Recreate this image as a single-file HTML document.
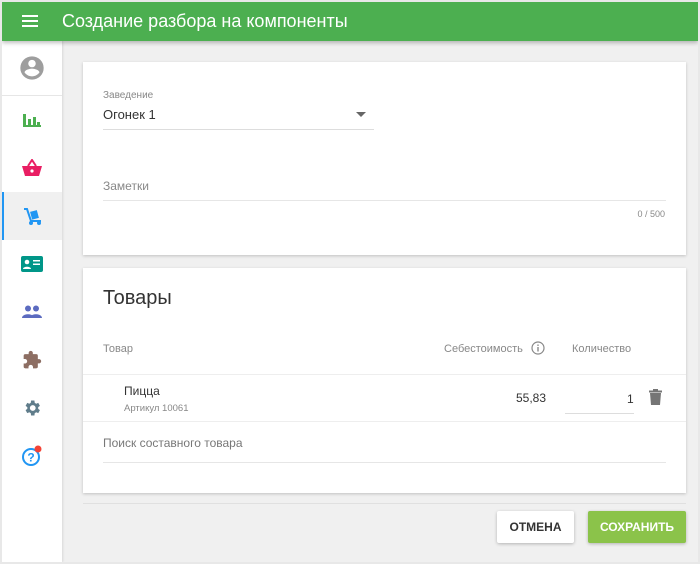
<!DOCTYPE html>
<html><head><meta charset="utf-8"><style>
*{box-sizing:border-box;margin:0;padding:0}
body{width:700px;height:564px;background:#e8e8e8;font-family:"Liberation Sans",sans-serif;position:relative;overflow:hidden}
.frame{position:absolute;left:2px;top:2px;width:696px;height:560px;background:#f0f0f0;overflow:hidden}
.hdr{position:absolute;left:0;top:0;width:696px;height:39px;background:#4caf50;color:#fff;box-shadow:0 2px 4px rgba(0,0,0,.25);z-index:2}
.hdr .t{position:absolute;left:60px;top:9px;font-size:18px}
.side{position:absolute;left:0;top:39px;width:60px;height:521px;background:#fff;box-shadow:1px 0 2px rgba(0,0,0,.1)}
.ic{position:absolute;left:0;width:60px;height:48px;display:flex;align-items:center;justify-content:center}
.card{position:absolute;left:81px;width:603px;background:#fff;box-shadow:0 1px 3px rgba(0,0,0,.2)}
.lbl{position:absolute;color:#888;font-size:10px}
.txt{position:absolute;color:#333;font-size:13px}
.line{position:absolute;height:1px;background:#ddd}
.btn{position:absolute;top:509px;height:32px;font-size:12px;font-weight:bold;display:flex;align-items:center;justify-content:center;box-shadow:0 1px 3px rgba(0,0,0,.25);border-radius:2px}
</style></head><body><div class="frame">
<div class="hdr"><svg style="position:absolute;left:20px;top:13px" width="16" height="12"><rect y="0" width="16" height="2" fill="#fff"/><rect y="5" width="16" height="2" fill="#fff"/><rect y="10" width="16" height="2" fill="#fff"/></svg><div class="t">Создание разбора на компоненты</div></div>
<div class="side">
<div class="ic" style="top:3px;height:48px"><svg width="28" height="28" viewBox="0 0 24 24"><path fill="#9e9e9e" d="M12 2A10 10 0 1 0 12 22A10 10 0 1 0 12 2ZM12 5a3.2 3.2 0 1 1 0 6.4a3.2 3.2 0 1 1 0-6.4ZM12 19.2c-2.7 0-5-1.4-6.4-3.4c0-2.1 4.3-3.3 6.4-3.3s6.4 1.2 6.4 3.3c-1.4 2-3.7 3.4-6.4 3.4Z"/></svg></div>
<div class="line" style="left:0;top:54px;width:60px;background:#e6e6e6"></div>
<div class="ic" style="top:55px"><svg width="18" height="16"><rect x="0" y="2" width="3" height="13" fill="#4caf50"/><rect x="5" y="7" width="3" height="8" fill="#4caf50"/><rect x="10" y="5" width="3" height="10" fill="#4caf50"/><rect x="14" y="10" width="3" height="5" fill="#4caf50"/><rect x="0" y="13" width="18" height="2" fill="#4caf50"/></svg></div>
<div class="ic" style="top:103px"><svg width="20" height="18" viewBox="0 0 20 18"><path d="M6 7L10 1L14 7" stroke="#e91e63" stroke-width="2" fill="none"/><path fill="#e91e63" d="M0 7h20l-3 10H3Z"/><circle cx="10" cy="12" r="1.6" fill="#fff"/></svg></div>
<div class="ic" style="top:151px;background:#f0f0f0;border-left:2px solid #2196f3"><svg width="20" height="20" viewBox="0 0 20 20"><path d="M1 3h3l4 12h10" stroke="#2196f3" stroke-width="2" fill="none"/><rect x="8" y="5" width="7" height="8" fill="#2196f3" transform="rotate(-15 11 9)"/><circle cx="8" cy="17" r="2" fill="#2196f3"/><circle cx="16" cy="17" r="2" fill="#2196f3"/></svg></div>
<div class="ic" style="top:199px"><svg width="22" height="16"><rect width="22" height="16" rx="2" fill="#009688"/><circle cx="6" cy="6" r="2.3" fill="#fff"/><path d="M2 13c0-3 8-3 8 0Z" fill="#fff"/><rect x="12" y="4" width="7" height="1.5" fill="#fff"/><rect x="12" y="7.5" width="7" height="1.5" fill="#fff"/></svg></div>
<div class="ic" style="top:247px"><svg width="20" height="14"><circle cx="6" cy="3.5" r="3" fill="#5c6bc0"/><circle cx="14" cy="3.5" r="3" fill="#5c6bc0"/><path d="M0 13c0-5 12-5 12 0Z M8 13c0-5 12-5 12 0Z" fill="#5c6bc0"/></svg></div>
<div class="ic" style="top:295px"><svg width="20" height="20" viewBox="0 0 24 24"><path fill="#8d6e63" d="M20.5 11H19V7a2 2 0 0 0-2-2h-4V3.5a2.5 2.5 0 0 0-5 0V5H4a2 2 0 0 0-2 2v3.8h1.5a2.7 2.7 0 0 1 0 5.4H2V20a2 2 0 0 0 2 2h3.8v-1.5a2.7 2.7 0 0 1 5.4 0V22H17a2 2 0 0 0 2-2v-4h1.5a2.5 2.5 0 0 0 0-5z"/></svg></div>
<div class="ic" style="top:343px"><svg width="20" height="20" viewBox="0 0 24 24"><path fill="#607d8b" d="M19.4 13a7.8 7.8 0 0 0 0-2l2.1-1.6-2-3.5-2.5 1a7 7 0 0 0-1.700-1L14.9 3h-4l-.4 2.9a7 7 0 0 0-1.7 1l-2.5-1-2 3.5L6.4 11a7.8 7.8 0 0 0 0 2l-2.1 1.6 2 3.5 2.5-1a7 7 0 0 0 1.7 1l.4 2.9h4l.4-2.9a7 7 0 0 0 1.7-1l2.5 1 2-3.5zM12.9 15.5a3.5 3.5 0 1 1 0-7a3.5 3.5 0 0 1 0 7z"/></svg></div>
<div class="ic" style="top:391px"><svg width="24" height="24" viewBox="0 0 24 24"><circle cx="11" cy="13" r="8" stroke="#2196f3" stroke-width="2" fill="none"/><text x="11" y="17.5" font-size="12" font-weight="bold" fill="#2196f3" text-anchor="middle" font-family="Liberation Sans">?</text><circle cx="18" cy="5" r="3.5" fill="#f44336"/></svg></div>
</div>
<div class="card" style="top:60px;height:193px">
<div class="lbl" style="left:20px;top:28px">Заведение</div>
<div class="txt" style="left:20px;top:45px">Огонек 1</div>
<svg style="position:absolute;left:273px;top:50px" width="10" height="5"><path d="M0 0h10L5 5Z" fill="#666"/></svg>
<div class="line" style="left:20px;top:67px;width:271px"></div>
<div class="txt" style="left:20px;top:117px;color:#888;font-size:12px">Заметки</div>
<div class="line" style="left:20px;top:138px;width:563px;background:#e6e6e6"></div>
<div class="lbl" style="right:21px;top:147px;font-size:9px">0 / 500</div>
</div>
<div class="card" style="top:266px;height:225px">
<div class="txt" style="left:20px;top:19px;font-size:20px">Товары</div>
<div class="lbl" style="left:20px;top:75px;font-size:11px">Товар</div>
<div class="lbl" style="left:361px;top:75px;font-size:11px">Себестоимость</div>
<svg style="position:absolute;left:448px;top:73px" width="14" height="14"><circle cx="7" cy="7" r="6" stroke="#888" stroke-width="1.2" fill="none"/><rect x="6.3" y="6" width="1.4" height="4.5" fill="#888"/><rect x="6.3" y="3.5" width="1.4" height="1.4" fill="#888"/></svg>
<div class="lbl" style="left:489px;top:75px;font-size:11px">Количество</div>
<div class="line" style="left:0;top:106px;width:603px;background:#eee"></div>
<div class="txt" style="left:41px;top:116px;font-size:12px">Пицца</div>
<div class="lbl" style="left:41px;top:135px;font-size:9.5px">Артикул 10061</div>
<div class="txt" style="left:433px;top:123px;font-size:12px">55,83</div>
<div class="txt" style="left:544px;top:124px;font-size:12px">1</div>
<div class="line" style="left:482px;top:145px;width:69px;background:#ddd"></div>
<svg style="position:absolute;left:566px;top:121px" width="13" height="16"><rect x="0" y="1.5" width="13" height="2" fill="#757575"/><rect x="4" y="0" width="5" height="2" fill="#757575"/><path d="M1 4h11l-1 12H2Z" fill="#757575"/></svg>
<div class="line" style="left:0;top:153px;width:603px;background:#eee"></div>
<div class="txt" style="left:20px;top:168px;color:#777;font-size:12px">Поиск составного товара</div>
<div class="line" style="left:20px;top:194px;width:563px;background:#e6e6e6"></div>
</div>
<div class="line" style="left:81px;top:501px;width:603px;background:#e0e0e0"></div>
<div class="btn" style="left:495px;width:77px;background:#fff;color:#333">ОТМЕНА</div>
<div class="btn" style="left:586px;width:98px;background:#8bc34a;color:#fff">СОХРАНИТЬ</div>
</div></body></html>
